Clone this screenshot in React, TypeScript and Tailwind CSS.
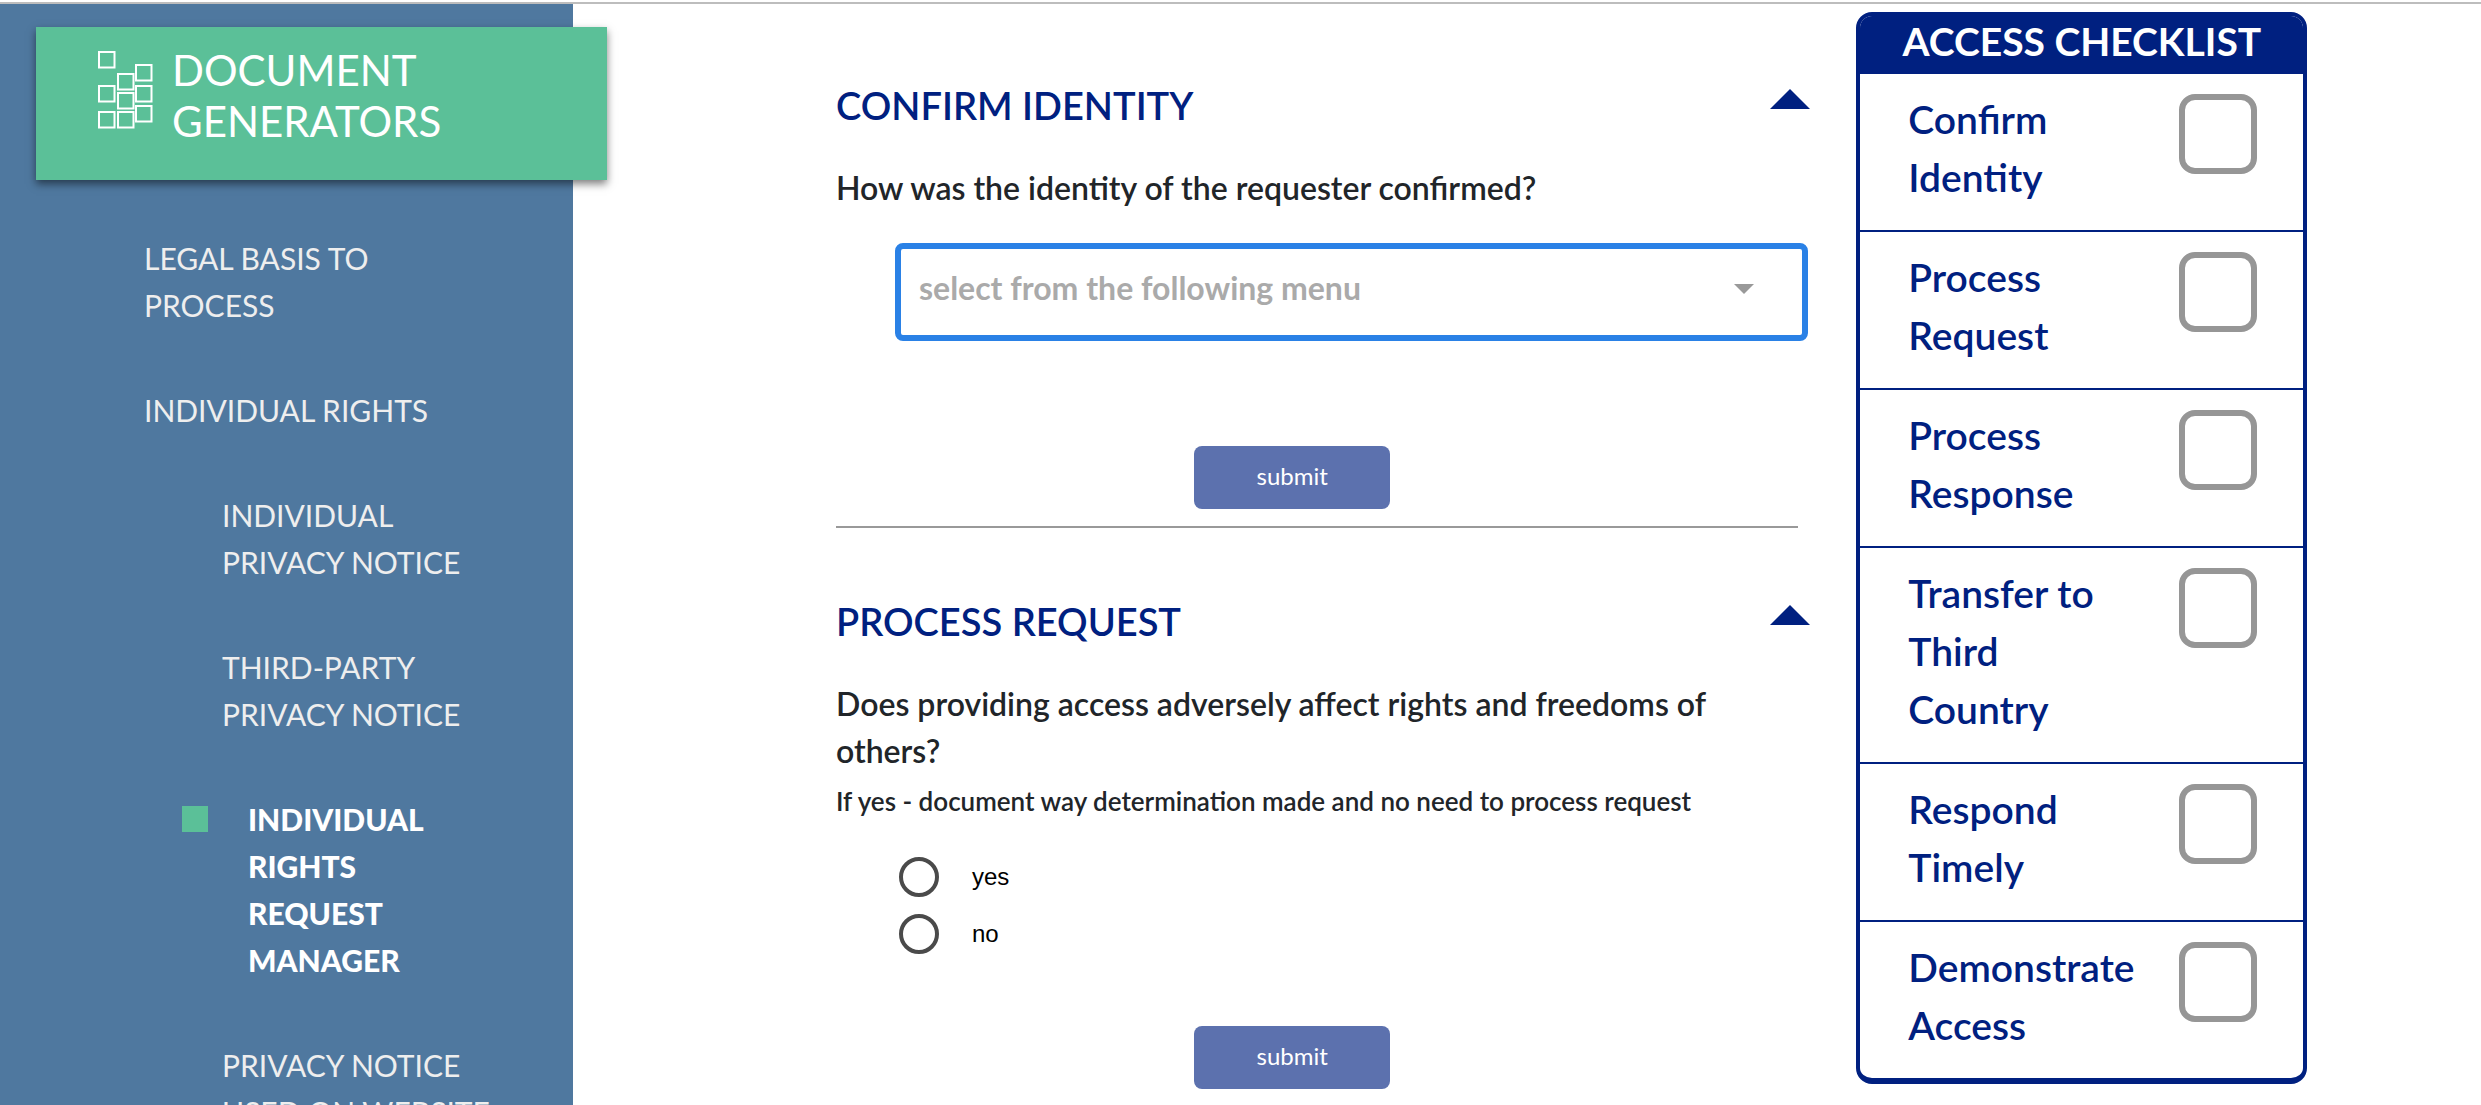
import { ComponentProps, ReactNode, useState } from 'react'
import { clsx } from 'clsx'

type NavItem = {
  label: string
  nested?: boolean
  active?: boolean
}

const navItems: NavItem[] = [
  { label: 'LEGAL BASIS TO PROCESS' },
  { label: 'INDIVIDUAL RIGHTS' },
  { label: 'INDIVIDUAL PRIVACY NOTICE', nested: true },
  { label: 'THIRD-PARTY PRIVACY NOTICE', nested: true },
  { label: 'INDIVIDUAL RIGHTS REQUEST MANAGER', nested: true, active: true },
  { label: 'PRIVACY NOTICE USED ON WEBSITE', nested: true },
]

const checklist = [
  'Confirm Identity',
  'Process Request',
  'Process Response',
  'Transfer to Third Country',
  'Respond Timely',
  'Demonstrate Access',
]

const logoSquares = [
  [1, 1],
  [38, 14],
  [20, 23],
  [1, 35],
  [38, 35],
  [20, 42],
  [38, 55],
  [1, 61],
  [20, 61],
]

const Logo = () => (
  <svg
    className="mt-6 h-20 w-14 shrink-0"
    viewBox="0 0 56 80"
    fill="none"
    stroke="white"
    strokeWidth="2"
    aria-hidden="true"
  >
    {logoSquares.map(([x, y]) => (
      <rect key={`${x}-${y}`} x={x} y={y} width="15.5" height="15.5" />
    ))}
  </svg>
)

const Sidebar = () => (
  <aside className="w-[573px] shrink-0 bg-[#4f789f]">
    <div className="mt-[23px] -mr-[34px] ml-9 flex h-[153px] gap-[18px] bg-[#5bc098] pl-[62px] shadow-[0_4px_8px_rgba(0,0,0,0.5)]">
      <Logo />
      <h1 className="mt-[18px] w-[300px] text-[42px] leading-[51px] text-white">
        DOCUMENT GENERATORS
      </h1>
    </div>
    <nav className="mt-[55px] text-[30px] leading-[47px] text-[#eeeeee]">
      <ul className="flex flex-col gap-[58px]">
        {navItems.map(({ label, nested, active }) => (
          <li
            key={label}
            className={clsx(
              active
                ? 'flex items-start gap-10 pl-[182px]'
                : nested
                  ? 'pl-[222px]'
                  : 'pl-36',
            )}
          >
            {active && (
              <span className="mt-2.5 h-[26px] w-[26px] shrink-0 bg-[#5bc098]" />
            )}
            <a
              href="#"
              aria-current={active ? 'page' : undefined}
              className={clsx(
                'block',
                active ? 'w-[190px] font-black text-white' : 'max-w-[290px]',
              )}
            >
              {label}
            </a>
          </li>
        ))}
      </ul>
    </nav>
  </aside>
)

const SubmitButton = (props: ComponentProps<'button'>) => (
  <button
    type="submit"
    className="block h-[63px] w-[196px] rounded-lg bg-[#5c71ae] pb-1 text-2xl text-white"
    {...props}
  >
    submit
  </button>
)

type SectionProps = {
  title: string
  children: ReactNode
}

const Section = ({ title, children }: SectionProps) => {
  const [open, setOpen] = useState(true)

  return (
    <section>
      <div className="-mr-3 flex items-center justify-between">
        <h2 className="text-[38px] leading-[58px] font-semibold text-[#002080]">
          {title}
        </h2>
        <button
          type="button"
          aria-label={`Toggle ${title}`}
          aria-expanded={open}
          onClick={() => setOpen(!open)}
        >
          <svg
            className={clsx('mb-3 h-5 w-10', !open && 'rotate-180')}
            viewBox="0 0 40 20"
            fill="#002080"
          >
            <path d="M20 0 40 20H0z" />
          </svg>
        </button>
      </div>
      {open && children}
    </section>
  )
}

const Checklist = () => (
  <aside className="mt-2 w-[451px] shrink-0 self-start overflow-hidden rounded-2xl border-4 border-b-[6px] border-[#002080]">
    <h2 className="h-[58px] bg-[#002080] text-center text-[39px] leading-[50px] font-bold text-white">
      ACCESS CHECKLIST
    </h2>
    <ul className="divide-y-2 divide-[#002080]">
      {checklist.map((item) => (
        <li key={item}>
          <label className="flex items-start justify-between pt-4 pr-[46px] pb-6 pl-12">
            <span className="w-[225px] text-[39px] leading-[58px] font-semibold text-[#002080]">
              {item}
            </span>
            <input
              type="checkbox"
              className="mt-1 h-20 w-[78px] shrink-0 appearance-none rounded-2xl border-[6px] border-[#969696] checked:bg-[#5bc098]"
            />
          </label>
        </li>
      ))}
    </ul>
  </aside>
)

export default function App() {
  return (
    <div className="flex min-h-screen flex-col bg-white font-['Lato','Liberation_Sans',sans-serif] text-[#212529]">
      <div className="mt-[2px] border-b-2 border-[#bdbdbd]" />
      <div className="flex grow">
        <Sidebar />
        <main className="min-w-0 grow pt-[72px] pr-[58px] pl-[263px]">
          <Section title="CONFIRM IDENTITY">
            <form onSubmit={(e) => e.preventDefault()}>
              <label
                htmlFor="identity"
                className="block pt-[30px] text-[32px] leading-[47px] font-semibold"
              >
                How was the identity of the requester confirmed?
              </label>
              <div className="relative mt-8 -mr-[10px] ml-[59px]">
                <select
                  id="identity"
                  className="h-[98px] w-full appearance-none rounded-lg border-[6px] border-[#2a81e6] bg-white pb-2 pl-[18px] text-[32px] font-bold text-[#aaaaaa] outline-none"
                >
                  <option>select from the following menu</option>
                </select>
                <svg
                  className="pointer-events-none absolute top-[41px] right-[54px] h-2.5 w-5"
                  viewBox="0 0 20 10"
                  fill="#999999"
                >
                  <path d="M0 0h20L10 10z" />
                </svg>
              </div>
              <div className="mt-[105px] flex justify-center pr-[50px]">
                <SubmitButton />
              </div>
            </form>
          </Section>
          <hr className="mt-[17px] mb-16 border-t-2 border-[#999999]" />
          <Section title="PROCESS REQUEST">
            <form onSubmit={(e) => e.preventDefault()}>
              <fieldset>
                <legend className="pt-[30px] text-[32px] leading-[47px] font-semibold">
                  Does providing access adversely affect rights and freedoms of
                  others?
                </legend>
                <p className="pt-1 text-[26px] leading-[47px] font-semibold">
                  If yes - document way determination made and no need to
                  process request
                </p>
                <div className="mt-8 ml-[63px] flex flex-col gap-[17px] font-['Liberation_Sans',sans-serif] text-2xl text-black">
                  {['yes', 'no'].map((answer) => (
                    <label
                      key={answer}
                      className="flex items-center gap-[33px] leading-10"
                    >
                      <input
                        type="radio"
                        name="adverse"
                        value={answer}
                        className="h-10 w-10 appearance-none rounded-full border-4 border-[#4a4a4a] checked:border-[12px]"
                      />
                      {answer}
                    </label>
                  ))}
                </div>
              </fieldset>
              <div className="mt-[72px] flex justify-center pr-[50px]">
                <SubmitButton />
              </div>
            </form>
          </Section>
        </main>
        <Checklist />
        <div className="w-[7%] shrink-0" />
      </div>
    </div>
  )
}
